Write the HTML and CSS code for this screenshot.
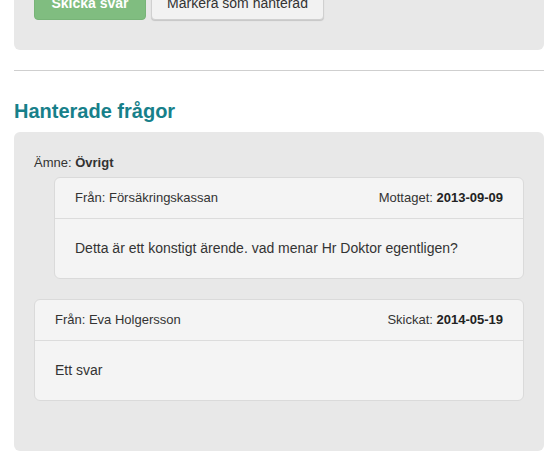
FILE: index.html
```html
<!DOCTYPE html>
<html lang="sv">
<head>
    <meta charset="UTF-8">
    <meta name="viewport" content="width=device-width, initial-scale=1.0">
    <title>Frågor</title>
    <link rel="stylesheet" href="styles.css">
</head>
<body>
    <div class="page">
        <div class="panel reply-panel">
            <div class="button-row">
                <button class="btn btn-send">Skicka svar</button>
                <button class="btn btn-mark">Markera som hanterad</button>
            </div>
        </div>

        <hr class="divider">

        <h2 class="section-title">Hanterade frågor</h2>

        <div class="panel thread">
            <p class="subject">Ämne: <strong>Övrigt</strong></p>

            <div class="message incoming">
                <div class="message-head">
                    <span>Från: Försäkringskassan</span>
                    <span>Mottaget: <strong>2013-09-09</strong></span>
                </div>
                <div class="message-body">Detta är ett konstigt ärende. vad menar Hr Doktor egentligen?</div>
            </div>

            <div class="message outgoing">
                <div class="message-head">
                    <span>Från: Eva Holgersson</span>
                    <span>Skickat: <strong>2014-05-19</strong></span>
                </div>
                <div class="message-body">Ett svar</div>
            </div>
        </div>
    </div>
</body>
</html>
```

FILE: styles.css
```css
* {
    margin: 0;
    padding: 0;
    box-sizing: border-box;
}

body {
    background-color: #fff;
    color: #333;
    font-family: 'Liberation Sans', Arial, sans-serif;
    font-size: 14px;
    overflow: hidden;
}

.page {
    width: 530px;
    margin: -34px 0 0 14px;
}

.panel {
    background-color: #e8e8e8;
    border-radius: 6px;
}

/* Reply panel */
.reply-panel {
    padding: 20px 20px 30px;
}

.button-row {
    display: flex;
    gap: 5px;
}

.btn {
    height: 34px;
    padding: 0;
    font-family: inherit;
    font-size: 14px;
    white-space: nowrap;
    border-radius: 4px;
    cursor: pointer;
}

.btn-send {
    width: 112px;
    background-color: #80bd80;
    color: #fff;
    font-weight: bold;
    border: 1px solid #78b478;
}

.btn-mark {
    width: 173px;
    background-color: #f2f2f2;
    color: #333;
    border: 1px solid #d0d0d0;
    box-shadow: 0 1px 1px rgba(0, 0, 0, 0.15);
}

.divider {
    border: none;
    border-top: 1px solid #cfcfcf;
    margin: 20px 0 29px;
}

.section-title {
    color: #17808a;
    font-size: 20px;
    line-height: 22px;
    font-weight: bold;
    margin-bottom: 10px;
}

/* Thread */
.thread {
    padding: 21px 20px 50px;
}

.subject {
    font-size: 13px;
    line-height: 20px;
    margin-bottom: 4px;
}

.message {
    background-color: #f4f4f4;
    border: 1px solid #dadada;
    border-radius: 6px;
}

.message.incoming {
    margin-left: 20px;
    margin-bottom: 20px;
}

.message-head {
    display: flex;
    justify-content: space-between;
    padding: 11px 20px;
    font-size: 13px;
    line-height: 18px;
    border-bottom: 1px solid #dcdcdc;
}

.message-head strong {
    color: #222;
}

.message-body {
    padding: 20px;
    line-height: 19px;
    font-size: 14px;
}
```
